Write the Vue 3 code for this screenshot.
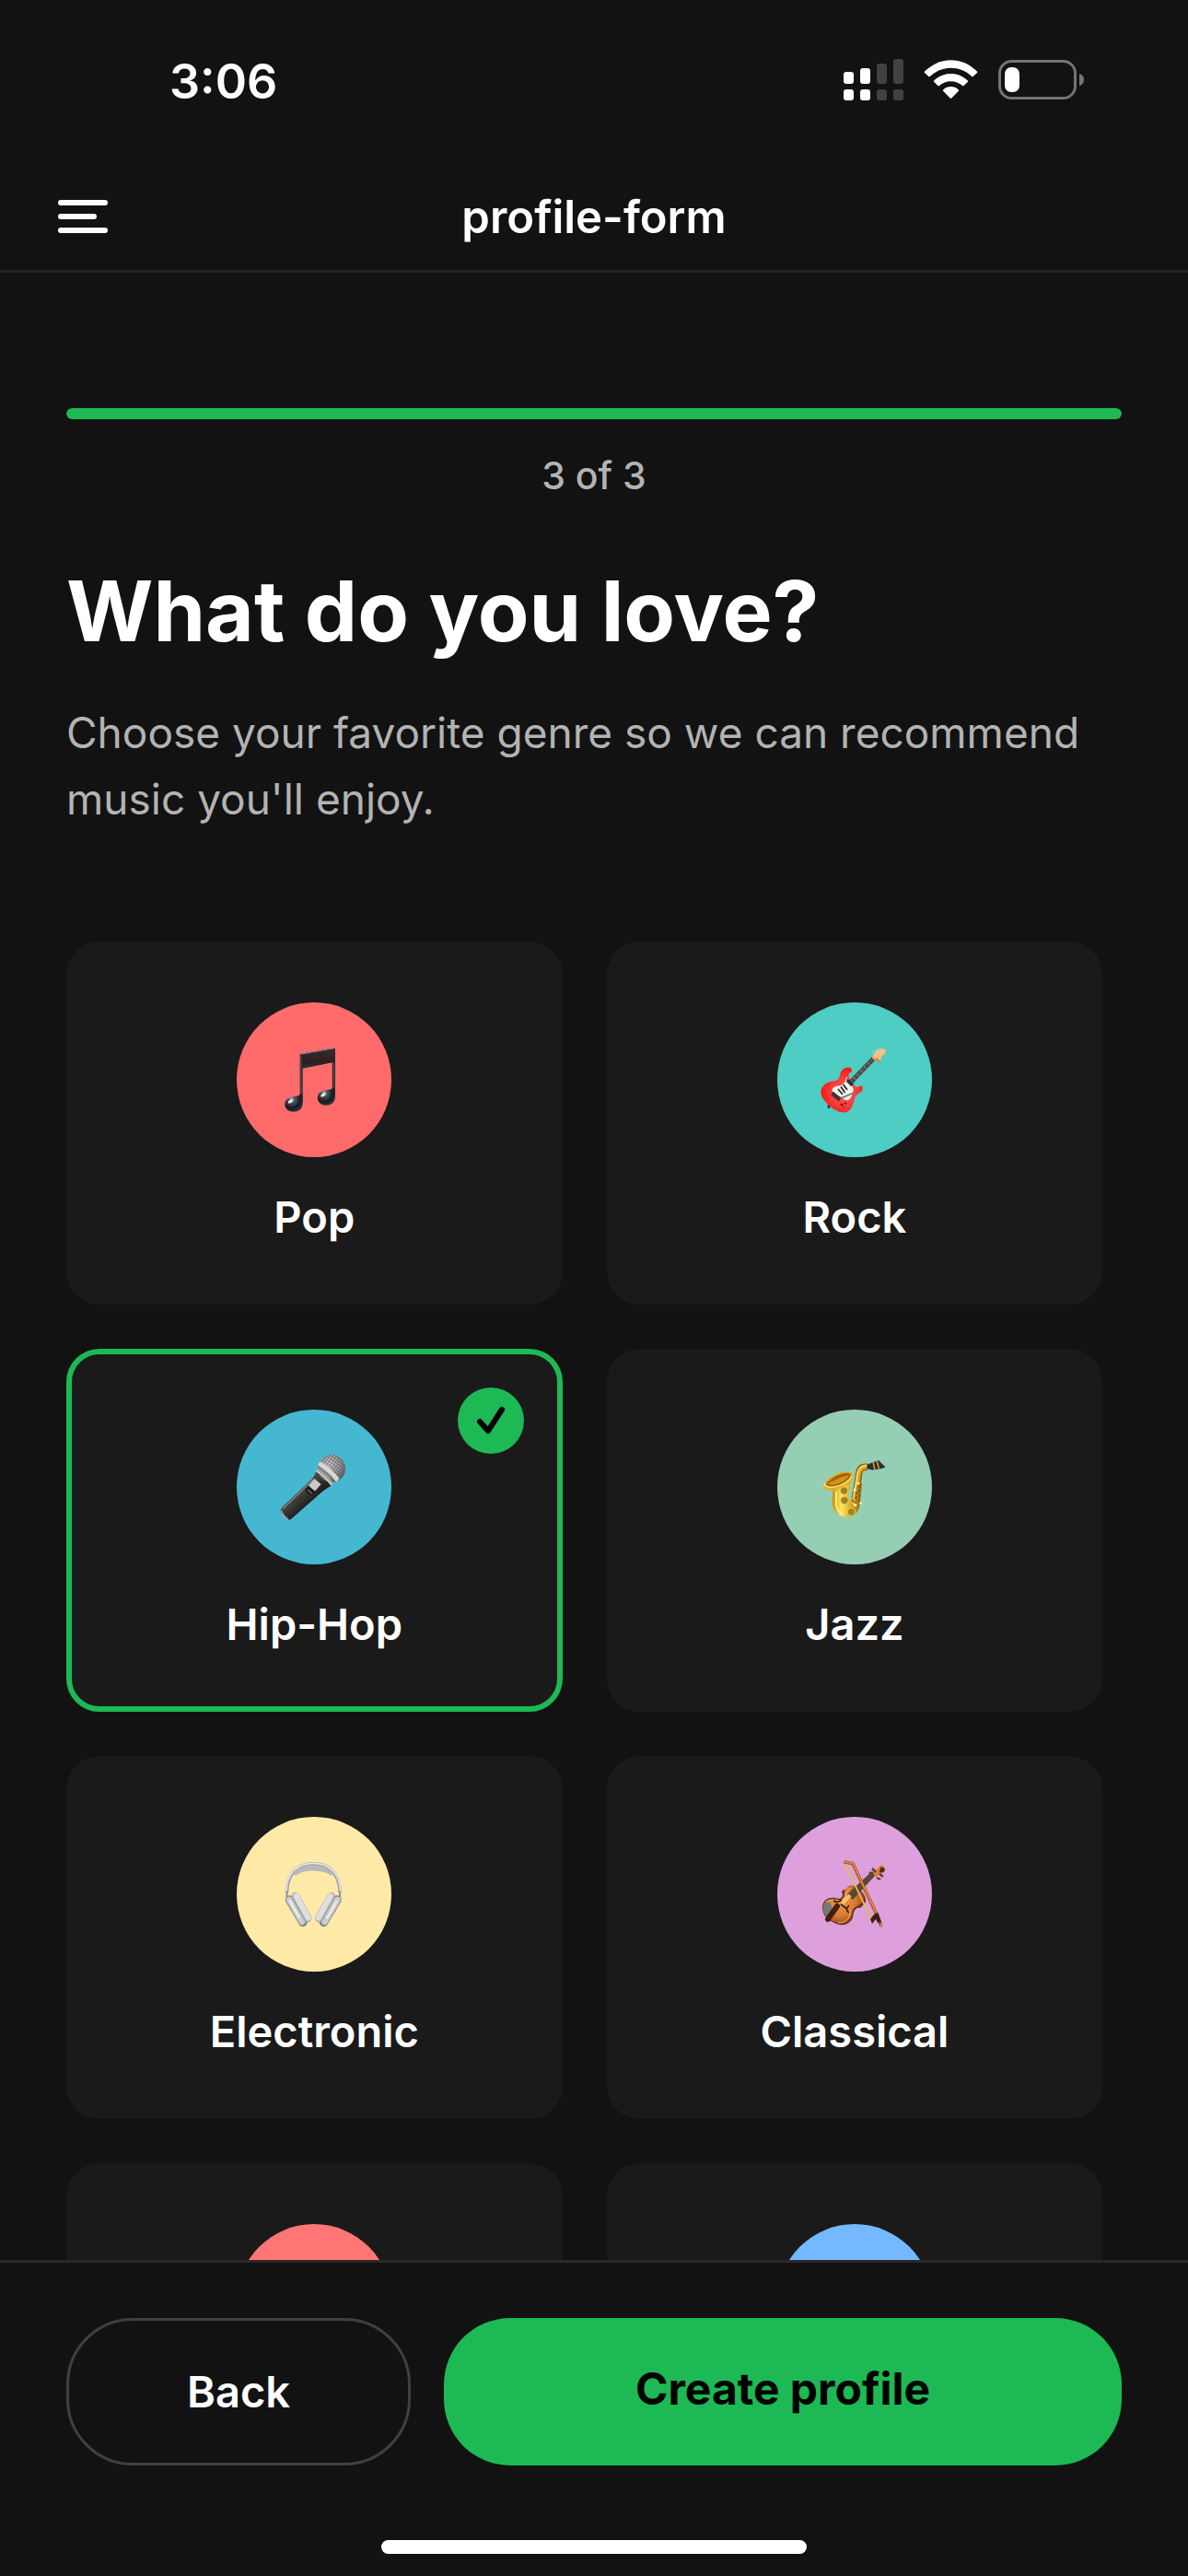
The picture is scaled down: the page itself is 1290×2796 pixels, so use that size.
<script setup>
import { ref } from 'vue'

const genres = [
  { id: 'pop', name: 'Pop', color: '#ff6b6b' },
  { id: 'rock', name: 'Rock', color: '#4ecdc4' },
  { id: 'hiphop', name: 'Hip-Hop', color: '#45b7d1' },
  { id: 'jazz', name: 'Jazz', color: '#96ceb4' },
  { id: 'electronic', name: 'Electronic', color: '#ffeaa7' },
  { id: 'classical', name: 'Classical', color: '#dda0dd' },
  { id: 'g7', name: '', color: '#ff7675' },
  { id: 'g8', name: '', color: '#74b9ff' },
]
const selected = ref('hiphop')
</script>

<template>
  <div class="screen">
    <div class="status">
      <span class="time">3:06</span>
      <svg class="status-icons" viewBox="0 0 262 50" aria-hidden="true">
        <g fill="#fff">
          <rect x="0" y="14" width="11" height="13" rx="3" />
          <rect x="18" y="10" width="11" height="17" rx="3" />
          <rect x="0" y="33" width="11" height="12" rx="3" />
          <rect x="18" y="33" width="11" height="12" rx="3" />
        </g>
        <g fill="#414141">
          <rect x="36" y="5" width="11" height="22" rx="3" />
          <rect x="54" y="0" width="11" height="27" rx="3" />
          <rect x="36" y="33" width="11" height="12" rx="3" />
          <rect x="54" y="33" width="11" height="12" rx="3" />
        </g>
        <g fill="#fff">
          <path d="M88 13.600C104 -2.800 129 -2.800 145 13.600Q145.600 14.300 145 15L140.600 19Q140 19.500 139.200 18.900C126 6.800 107 6.800 93.800 18.900Q93 19.500 92.400 19L88 15Q87.400 14.300 88 13.600Z" />
          <path d="M98.200 23.400C108.500 13.500 124.500 13.500 134.800 23.400Q135.500 24.100 134.900 24.800L130.600 29.100Q129.900 29.700 129.100 29.100C122 22.700 111 22.700 103.900 29.100Q103.100 29.700 102.400 29.100L98.100 24.800Q97.500 24.100 98.200 23.400Z" />
          <path d="M108.200 33.400C113 29 120 29 124.800 33.400Q125.500 34 124.900 34.700L117.300 42.400Q116.500 43.100 115.700 42.400L108.100 34.700Q107.500 34 108.200 33.400Z" />
        </g>
        <rect x="169.500" y="2.500" width="82" height="40" rx="13" fill="none" stroke="#747474" stroke-width="3" />
        <rect x="175" y="9" width="16" height="27" rx="7" fill="#fff" />
        <path d="M256 16Q261 17.500 261 22.500T256 29.500Z" fill="#747474" />
      </svg>
    </div>

    <header class="bar">
      <button class="menu" type="button" aria-label="Menu">
        <span></span><span class="short"></span><span></span>
      </button>
      <div class="bar-title">profile-form</div>
    </header>

    <main class="content">
      <div class="progress"><div class="progress-fill" :style="{ width: '100%' }"></div></div>
      <p class="step">3 of 3</p>
      <h1>What do you love?</h1>
      <p class="lead">Choose your favorite genre so we can recommend music you'll enjoy.</p>

      <div class="genres">
        <label v-for="g in genres" :key="g.id" class="card" :class="{ on: selected === g.id }">
          <input v-model="selected" type="radio" name="genre" :value="g.id" />
          <span class="disc" :style="{ background: g.color }">
            <svg viewBox="0 0 168 168" aria-hidden="true">
              <defs>
                <radialGradient id="noteHead" cx=".38" cy=".32" r=".8">
                  <stop offset="0" stop-color="#b9c6cd" /><stop offset=".2" stop-color="#4e5d66" /><stop offset=".6" stop-color="#171a1d" /><stop offset="1" stop-color="#344650" />
                </radialGradient>
                <linearGradient id="beam" x2="0" y2="1">
                  <stop offset="0" stop-color="#3b2d2f" /><stop offset=".65" stop-color="#2a1f21" /><stop offset="1" stop-color="#26323b" />
                </linearGradient>
                <radialGradient id="redBody" cx=".55" cy=".55" r=".6">
                  <stop offset="0" stop-color="#ff5c5c" /><stop offset=".55" stop-color="#fb3a38" /><stop offset="1" stop-color="#fb0d08" />
                </radialGradient>
                <linearGradient id="micBody" x1="0" y1="0" x2=".6" y2=".6">
                  <stop offset=".2" stop-color="#3a3837" /><stop offset=".5" stop-color="#7c7a79" /><stop offset=".65" stop-color="#4a4847" /><stop offset="1" stop-color="#211f1f" />
                </linearGradient>
                <radialGradient id="micBall" cx=".4" cy=".35" r=".7">
                  <stop offset="0" stop-color="#d8d8d8" /><stop offset=".6" stop-color="#9a9a9a" /><stop offset="1" stop-color="#5c5c5c" />
                </radialGradient>
                <pattern id="mesh" width="3" height="3" patternUnits="userSpaceOnUse" patternTransform="rotate(35)">
                  <path d="M0 0H3M0 0V3" stroke="#4b4b4b" stroke-width="1" />
                </pattern>
                <linearGradient id="gold">
                  <stop offset="0" stop-color="#c98d10" /><stop offset=".3" stop-color="#ffe65c" /><stop offset=".65" stop-color="#d6a521" /><stop offset="1" stop-color="#8e6413" />
                </linearGradient>
                <radialGradient id="wood" cx=".4" cy=".4" r=".65">
                  <stop offset="0" stop-color="#f19a4c" /><stop offset=".6" stop-color="#d97b35" /><stop offset="1" stop-color="#96481b" />
                </radialGradient>
              </defs>

              <g v-if="g.id === 'pop'">
                <path d="M68.700 56L107 49.300V101H103.800V65L71.700 71.500V108H68.700Z" fill="#29282b" />
                <path d="M69 56L107 49.300V64.500L70 72Z" fill="url(#beam)" />
                <path d="M69 56.200L107 49.600" stroke="#8e8b91" stroke-width="1" />
                <path d="M70 58V104M105.500 66V96" stroke="#59656c" stroke-width=".8" />
                <path d="M71.700 99V109C71.700 116 67 118.700 61.500 118.700C55.500 118.700 52.300 115 52.300 110.500C52.300 103 60 102.500 65 101.700C68 101.200 69 100 69.500 99Z" fill="url(#noteHead)" />
                <path d="M107 92V102C107 109 102.500 111.700 97 111.700C91 111.700 87.800 108 87.800 103.500C87.800 96 95.500 95.500 100.500 94.700C103.500 94.200 104.500 93 105 92Z" fill="url(#noteHead)" />
                <ellipse cx="58.500" cy="107.500" rx="3" ry="1.500" transform="rotate(-30 58.500 107.500)" fill="#eef5f8" />
                <ellipse cx="94" cy="100.500" rx="3" ry="1.500" transform="rotate(-30 94 100.500)" fill="#eef5f8" />
              </g>

              <g v-else-if="g.id === 'rock'">
                <path d="M56 111V115M70 108" stroke="#333" stroke-width="2.500" />
                <path d="M77 70.500C81 70.500 82 74 80 76C77 77 76.500 80 79 83L83 89C85 93 88 92 90 90.500C93 90 93.500 93 92 96C90 99 86 99.500 84.500 103C82 109 82.500 114 78 117.500C73 121.500 64 119 57 112.500C51 107 47 102 47.500 97C48 90 54 86.500 60 85.500C66 85 67 83 68 79C69 74 72 70.500 77 70.500Z" fill="url(#redBody)" />
                <path d="M75.500 81C79 83 78 88 82 92C84 96 81 101 79.500 104C76.500 107.500 73 106.500 70 103L60 98C58.500 93 62 91 67 90.500C72 90 74 86 75.500 81Z" fill="#f1f1ef" />
                <path d="M79 87.500L105 60.500" stroke="#4a4748" stroke-width="5" />
                <path d="M82.500 81L86 84.500M86 77.300L89.500 81M90 73L93.500 76.700M94 69L97.500 72.500M98 64.800L101.500 68.500" stroke="#9b9898" stroke-width=".8" />
                <path d="M78 88L104.500 60.500" stroke="#8b8786" stroke-width=".6" />
                <path d="M76 82L83 89L80 91L75 86Z" fill="#333134" />
                <path d="M71.500 89L76 95M69 91.500L73.500 98M66 94L71 100" stroke="#262626" stroke-width="1.700" />
                <path d="M60.500 96.500L69.500 104L67 107.500L58.500 100.500Z" fill="#38383a" />
                <path d="M68 104.500L84.500 97.500" stroke="#6d6d6d" stroke-width="1.500" />
                <circle cx="70" cy="111" r="1.500" fill="#811" /><circle cx="74" cy="109.500" r="1.200" fill="#811" /><circle cx="72" cy="114" r="1.200" fill="#555" />
                <path d="M103 59.500L106.500 53.500C110 51.500 113 49.500 116 50.500C118.500 51.500 118 54.500 116 56.500C112.500 58.500 113.500 61 112 64L108.500 62L105.500 63Z" fill="#f8bd7e" />
                <path d="M103.500 60L106.500 63L109 60.500M112 64L108.500 62" stroke="#e18332" stroke-width="1.600" fill="none" />
                <path d="M103 54L113 49M105.500 56L115.500 51.500" stroke="#e9e4dc" stroke-width="1" stroke-dasharray="1.500 1.500" />
              </g>

              <g v-else-if="g.id === 'hiphop'">
                <path d="M86.500 66L104 81.500C99 85 97 86 93 89L60 118Q57 121 53.500 118L49 113Q46.500 110.500 48.500 107L82 75Q85 71 86.500 66Z" fill="url(#micBody)" />
                <path d="M48.300 109.500Q50 115.500 56 119" stroke="#b6b2af" stroke-width="1.200" fill="none" />
                <path d="M50 108L83 76" stroke="#858280" stroke-width="1.400" />
                <circle cx="103" cy="64" r="15" fill="url(#micBall)" />
                <circle cx="103" cy="64" r="15" fill="url(#mesh)" />
                <path d="M90 56.500Q101 61 111.500 75L108 78.500Q99 66 88.500 60.500Z" fill="#d9d9d9" />
                <path d="M87 63.500Q97 69 106 80.500L102.500 82.500Q94 72 86 67Z" fill="#a5a5a5" />
                <path d="M86.300 66.500Q95 72 103 82" stroke="#d5d5d5" stroke-width="1.400" fill="none" />
                <path d="M78.500 82L74 87Q76 92 81.500 93L87 88Z" fill="#1e1d1d" />
                <path d="M84.500 75L91.500 81L85 88.500L78 82.500Z" fill="#cfcaca" />
                <path d="M77 87L82 91" stroke="#737070" stroke-width="1.500" />
              </g>

              <g v-else-if="g.id === 'jazz'">
                <path d="M98.500 62.500C90 61 88.500 66 88 74L83.500 101" stroke="#85600f" stroke-width="7.500" fill="none" />
                <path d="M98 62C90 61.500 88 67 87.500 75L83 102" stroke="#d9a726" stroke-width="5" fill="none" />
                <path d="M97 60.500C89 61 87 67 86.500 75L82 100" stroke="#ffe879" stroke-width="1.300" fill="none" />
                <path d="M60 84C61 92 58.500 99 60.500 106C63 114 70 117.500 78 116.500C85 115.500 89 110 90 101L92 80L88 78L84 94C82 101 77 100 77 94L81 74Z" fill="url(#gold)" />
                <path d="M64 89V103Q65 112 73 114" stroke="#fff08b" stroke-width="1.800" fill="none" />
                <ellipse cx="66.500" cy="77.500" rx="17" ry="8" transform="rotate(-25 66.500 77.500)" fill="#e1ae25" />
                <ellipse cx="66.500" cy="76.500" rx="14.500" ry="5.200" transform="rotate(-25 66.500 76.500)" fill="#a06410" />
                <path d="M55 80L68 74L78 71Q75 78 64 81Q57 83 55 80Z" fill="#cf9421" />
                <path d="M51 80Q52 85 61 84Q76 82 81 72" stroke="#ffe568" stroke-width="1.500" fill="none" />
                <g fill="#9c8522" stroke="#f3ce4d" stroke-width="1"><circle cx="72.500" cy="88" r="4.200" /><circle cx="73" cy="98.500" r="4.200" /><circle cx="80.500" cy="111" r="4.200" /><circle cx="82" cy="99" r="2.500" /></g>
                <g fill="#fff2ae"><circle cx="84" cy="87" r="1.600" /><circle cx="88" cy="80" r="1.600" /><circle cx="84.500" cy="103.500" r="1.800" /><circle cx="90.500" cy="101.500" r="1.300" /></g>
                <path d="M89 82V101M86 89L85 103" stroke="#725014" stroke-width="1.200" stroke-dasharray="3 2" />
                <path d="M97.500 60L103 57.500L110 55L117.500 62.500Q113 64.500 103 65.500L97.500 64Z" fill="#2c2d35" />
                <path d="M104 57L106 65.500M108 55.500L110.500 64.500" stroke="#d6a52a" stroke-width="1.500" />
              </g>

              <g v-else-if="g.id === 'electronic'" fill="none" stroke-linecap="round">
                <path d="M54.500 81C55 62 66 51 83.200 51S111.500 62 112 81" stroke="#a7a8aa" stroke-width="3.800" />
                <path d="M63 63C71 51.500 95 51.500 103.500 63C95 55 71 55 63 63Z" stroke="#b7b8ba" stroke-width="3" fill="#b7b8ba" />
                <path d="M53.800 80C54.500 61 66 50.300 83.200 50.300S112 61 112.700 80" stroke="#e5e6e8" stroke-width="1.700" />
                <path d="M54.500 82V88M112 82V88" stroke="#8d8e90" stroke-width="2" />
                <path d="M57.500 90L72 114.500" stroke="#85878a" stroke-width="9.500" />
                <path d="M57 90L71 114" stroke="#c9ccd0" stroke-width="6.500" />
                <path d="M57.500 91L68 109" stroke="#f0f1f2" stroke-width="2" />
                <path d="M64 86.500L77 110" stroke="#a8a8a8" stroke-width="9" />
                <path d="M64.800 86L77.700 109.500" stroke="#dfdfdf" stroke-width="6.500" />
                <path d="M109 90L94.500 114.500" stroke="#85878a" stroke-width="9.500" />
                <path d="M109.500 90L95.500 114" stroke="#c9ccd0" stroke-width="6.500" />
                <path d="M108.500 92L98 110" stroke="#f0f1f2" stroke-width="2" />
                <path d="M102.500 86.500L89.500 110" stroke="#a8a8a8" stroke-width="9" />
                <path d="M101.700 86L88.800 109.500" stroke="#dfdfdf" stroke-width="6.500" />
              </g>

              <g v-else-if="g.id === 'classical'">
                <path d="M78 75C86 73 95 82 96 90C97 94 92 97 90 99C87 98 84 100 83 104L82 109C80 115 74 118.500 67 117C57 114 48 107 49 97C50 90 56 87 63 88C68 90 71 88 71 84C69 81 71 79 74 79Z" fill="#6c3516" />
                <path d="M79 75C86 74 93 81 94 88C94 93 90 94 87 97C83 98 81 101 81 106C79 112 74 117 67 115.500C57 113 49 106 50 97C51 91 57 89 62 90C68 91 73 90 73 84C73 78 76 76 79 75Z" fill="url(#wood)" />
                <path d="M53 92C62 87 67 94 73 88C75 84 75 80 80 77M66 115C77 115 79 108 79 101" stroke="#f2b46a" stroke-width="1" fill="none" />
                <path d="M76 84L103 59L107 63L82 90Z" fill="#5c4636" />
                <path d="M70.500 94L79 85" stroke="#fac06e" stroke-width="4" />
                <path d="M69 95L76 100M70 90Q65 94 61 91M78 96Q73 101 78 104" stroke="#321c13" stroke-width="1.700" fill="none" />
                <ellipse cx="54.500" cy="99.500" rx="5" ry="7" fill="#777a73" />
                <path d="M55 111L65 97" stroke="#3e2115" stroke-width="6" stroke-linecap="round" />
                <path d="M104 62L111 54Q112 51 116 54Q119 58 113 61L107 65Z" fill="#d87a2d" />
                <path d="M112 55Q115 54 117 57Q116 62 111 60Z" fill="#572815" />
                <path d="M100 60L104 64M103 56L107 60M108 66L112 68M111 62L115 65" stroke="#684124" stroke-width="2.500" />
                <path d="M74 52L102 111" stroke="#e6bb50" stroke-width="1.800" />
                <path d="M72.500 49L82 50.500L108 106L113 119" stroke="#994617" stroke-width="3.400" fill="none" />
                <path d="M72.500 49L82 50L108 105.500" stroke="#e38a3f" stroke-width="1.800" fill="none" />
                <path d="M106 105L109.500 104L113 114L109 115L107 111L103 116L101 111Z" fill="#3c2112" />
                <path d="M112 116L113.500 119.500" stroke="#d18d47" stroke-width="2" />
              </g>
            </svg>
          </span>
          <span class="name">{{ g.name }}</span>
          <span v-if="selected === g.id" class="badge">
            <svg viewBox="0 0 72 72" aria-hidden="true">
              <path d="M24 37L33 47L48 24" fill="none" stroke="#000" stroke-width="6" stroke-linecap="round" stroke-linejoin="round" />
            </svg>
          </span>
        </label>
      </div>
    </main>

    <footer class="actions">
      <div class="buttons">
        <button class="back" type="button">Back</button>
        <button class="create" type="button">Create profile</button>
      </div>
      <div class="home"></div>
    </footer>
  </div>
</template>

<style>
body {
  background: #121212;
}
</style>

<style scoped>
* {
  box-sizing: border-box;
}
.screen {
  height: 100vh;
  display: flex;
  flex-direction: column;
  background: #121212;
  color: #fff;
  font-family: Inter, Roboto, sans-serif;
}
.status {
  flex: none;
  height: 177px;
  padding: 0 112px 0 184px;
  display: flex;
  align-items: center;
  justify-content: space-between;
}
.time {
  font-size: 52px;
  font-weight: 600;
}
.status-icons {
  width: 262px;
  height: 50px;
}
.bar {
  flex: none;
  height: 119px;
  padding: 0 63px;
  border-bottom: 3px solid #222224;
  display: grid;
  grid-template-columns: 1fr auto 1fr;
  align-items: center;
}
.menu {
  width: 54px;
  padding: 0;
  border: 0;
  background: none;
  display: flex;
  flex-direction: column;
  gap: 9px;
}
.menu span {
  width: 100%;
  height: 6px;
  border-radius: 3px;
  background: #fff;
}
.menu .short {
  width: 42px;
}
.bar-title {
  font-size: 49px;
  font-weight: 600;
}
.content {
  flex: 1;
  min-height: 0;
  overflow-y: auto;
  scrollbar-width: none;
  padding: 147px 72px 60px;
}
.progress {
  height: 12px;
  border-radius: 6px;
  background: #282828;
  overflow: hidden;
}
.progress-fill {
  height: 100%;
  border-radius: 6px;
  background: #1db954;
}
.step {
  margin: 36px 0 0;
  text-align: center;
  font-size: 41px;
  line-height: 50px;
  font-weight: 500;
  color: #b3b3b3;
}
h1 {
  margin: 62px 0 0;
  font-size: 91px;
  line-height: 120px;
  font-weight: 700;
}
.lead {
  margin: 36px 0 0;
  font-size: 46px;
  line-height: 72px;
  color: #b3b3b3;
}
.genres {
  margin-top: 119px;
  display: flex;
  flex-wrap: wrap;
  gap: 48px;
}
.card {
  position: relative;
  width: 47%;
  padding: 60px 0;
  border: 6px solid #1a1a1a;
  border-radius: 36px;
  background: #1a1a1a;
  display: flex;
  flex-direction: column;
  align-items: center;
  gap: 36px;
}
.card.on {
  border-color: #1db954;
}
.card input {
  position: absolute;
  inset: 0;
  width: 100%;
  height: 100%;
  margin: 0;
  opacity: 0;
}
.disc {
  width: 168px;
  height: 168px;
  border-radius: 50%;
}
.disc svg,
.badge svg {
  display: block;
  width: 100%;
  height: 100%;
}
.name {
  min-height: 58px;
  font-size: 47px;
  line-height: 58px;
  font-weight: 600;
}
.badge {
  position: absolute;
  top: 36px;
  right: 36px;
  width: 72px;
  height: 72px;
  border-radius: 50%;
  background: #1db954;
}
.actions {
  flex: none;
  padding: 60px 72px 24px;
  border-top: 3px solid #282828;
}
.buttons {
  display: flex;
  gap: 36px;
}
.buttons button {
  display: flex;
  align-items: flex-start;
  justify-content: center;
  padding: 48px 0;
  border-radius: 72px;
  font-family: inherit;
  line-height: 58px;
}
.buttons .back {
  flex: 1;
  border: 3px solid #404040;
  background: none;
  color: #fff;
  font-size: 47px;
  font-weight: 600;
}
.buttons .create {
  flex: 2;
  border: 0;
  background: #1db954;
  color: #000;
  font-size: 48px;
  font-weight: 700;
}
.home {
  width: 462px;
  height: 15px;
  margin: 81px auto 0;
  border-radius: 8px;
  background: #fff;
}
</style>
